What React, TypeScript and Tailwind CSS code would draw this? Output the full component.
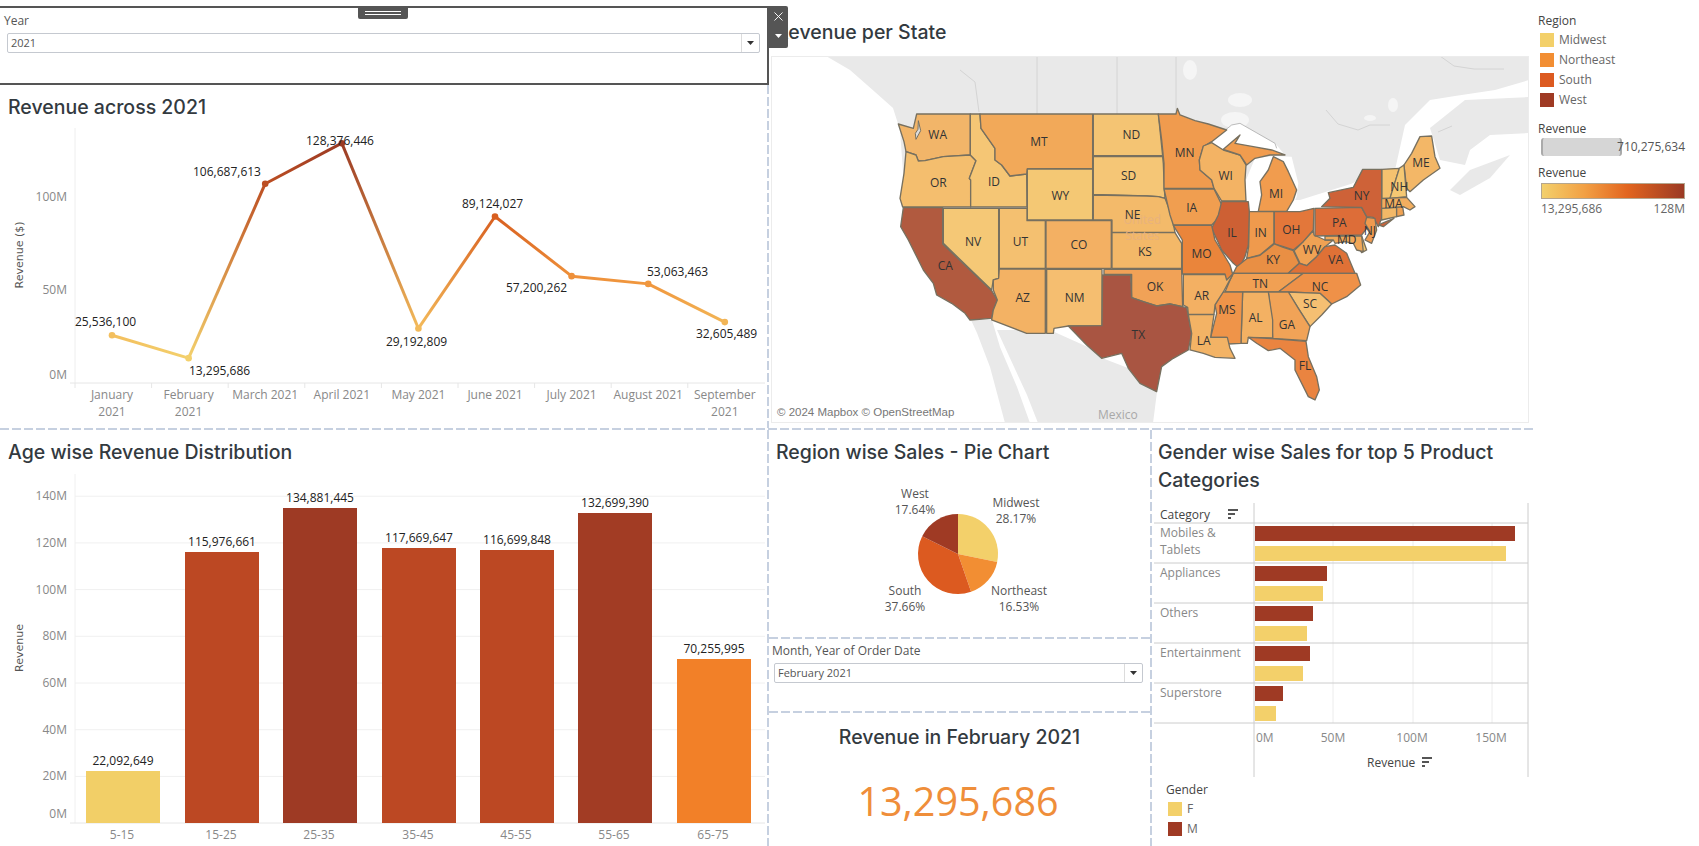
import { X } from "lucide-react";

const GOLD = "#F3D06A";
const ORANGE = "#F28E33";
const RUST = "#DC5A20";
const BROWN = "#9F3A24";

// colour scale of the revenue measure, 13.3M .. 128.4M
const STOPS: [number, number[]][] = [
  [0, [243, 208, 108]],
  [0.3, [242, 160, 68]],
  [0.6, [226, 101, 31]],
  [1, [155, 58, 36]],
];

function revenueColor(v: number) {
  const t = Math.min(1, Math.max(0, (v - 13.3) / (128.4 - 13.3)));
  for (let i = 1; i < STOPS.length; i++) {
    const [p0, c0] = STOPS[i - 1];
    const [p1, c1] = STOPS[i];
    if (t <= p1) {
      const k = (t - p0) / (p1 - p0);
      const mix = c0.map((c, j) => Math.round(c + (c1[j] - c) * k));
      return `rgb(${mix.join(",")})`;
    }
  }
  return "rgb(155,58,36)";
}

const months = [
  { x: 112, v: 25.536, label: "25,536,100", lx: 75, ly: 326, name: ["January", "2021"] },
  { x: 188.6, v: 13.296, label: "13,295,686", lx: 189, ly: 375, name: ["February", "2021"] },
  { x: 265.2, v: 106.688, label: "106,687,613", lx: 193, ly: 176, name: ["March 2021"] },
  { x: 341.8, v: 128.376, label: "128,376,446", lx: 306, ly: 145, name: ["April 2021"] },
  { x: 418.4, v: 29.193, label: "29,192,809", lx: 386, ly: 346, name: ["May 2021"] },
  { x: 495, v: 89.124, label: "89,124,027", lx: 462, ly: 208, name: ["June 2021"] },
  { x: 571.6, v: 57.2, label: "57,200,262", lx: 506, ly: 292, name: ["July 2021"] },
  { x: 648.2, v: 53.063, label: "53,063,463", lx: 647, ly: 276, name: ["August 2021"] },
  { x: 724.8, v: 32.605, label: "32,605,489", lx: 696, ly: 338, name: ["September", "2021"] },
];

const lineY = (v: number) => 383 - v * 1.868;

const ageBars = [
  { name: "5-15", x: 86, top: 771, color: "#F2CF67", label: "22,092,649" },
  { name: "15-25", x: 185, top: 552, color: "#BC4823", label: "115,976,661" },
  { name: "25-35", x: 283, top: 508, color: "#9E3A24", label: "134,881,445" },
  { name: "35-45", x: 382, top: 548, color: "#BC4823", label: "117,669,647" },
  { name: "45-55", x: 480, top: 550, color: "#BC4823", label: "116,699,848" },
  { name: "55-65", x: 578, top: 513, color: "#A23C24", label: "132,699,390" },
  { name: "65-75", x: 677, top: 659, color: "#F28028", label: "70,255,995" },
];

const ageTicks = ["20M", "40M", "60M", "80M", "100M", "120M", "140M"];

// polygons traced in a 3x crop whose corner is (880,100)
const westStates = [
  { id: "WA", fill: "#F2B569", lx: 173, ly: 103, pts: "110,42 271,42 271,165 190,170 135,182 115,183 108,165 78,155 72,125 55,72 100,85" },
  { id: "OR", fill: "#F4BE6E", lx: 175, ly: 247, pts: "78,155 108,165 115,183 135,182 190,170 271,165 288,182 268,235 272,240 272,321 68,321 60,295 72,220" },
  { id: "ID", fill: "#F5C675", lx: 342, ly: 244, pts: "271,42 300,42 303,85 345,145 345,180 365,195 390,228 440,222 441,321 272,321 272,240 268,235 288,182 271,165" },
  { id: "MT", fill: "#F2A959", lx: 477, ly: 124, pts: "300,42 638,42 638,205 442,207 440,222 390,228 365,195 345,180 345,145 303,85" },
  { id: "WY", fill: "#F4C874", lx: 541, ly: 286, pts: "442,207 638,207 638,360 442,360" },
  { id: "ND", fill: "#F4C473", lx: 754, ly: 103, pts: "640,42 835,42 838,70 848,167 640,167" },
  { id: "SD", fill: "#F5C676", lx: 746, ly: 226, pts: "640,170 848,170 850,190 853,265 855,295 835,290 800,288 640,283" },
  { id: "NE", fill: "#F3BA6A", lx: 758, ly: 343, pts: "640,285 800,288 835,290 855,295 875,345 885,397 696,397 696,360 640,360" },
  { id: "KS", fill: "#F3B868", lx: 795, ly: 454, pts: "696,398 885,398 905,430 905,505 696,505" },
  { id: "CO", fill: "#F3B063", lx: 597, ly: 433, pts: "498,362 694,362 694,505 498,505" },
  { id: "UT", fill: "#F4C070", lx: 421, ly: 424, pts: "358,325 441,325 441,362 496,362 496,505 358,505" },
  { id: "NV", fill: "#F5C876", lx: 279, ly: 424, pts: "190,325 356,325 356,535 340,540 335,570 190,430" },
  { id: "CA", fill: "#B15A3F", lx: 196, ly: 497, pts: "70,323 188,323 188,432 335,572 352,600 340,630 335,655 270,660 255,640 215,610 170,585 160,550 130,510 115,480 85,420 62,380" },
  { id: "AZ", fill: "#F3B264", lx: 428, ly: 592, pts: "358,507 496,507 496,700 440,700 335,660 340,630 352,600 340,570 340,540 356,535" },
  { id: "NM", fill: "#F5BE70", lx: 584, ly: 592, pts: "500,508 666,508 666,677 565,678 522,685 520,700 500,700" },
  { id: "OK", fill: "#F1A257", lx: 825, ly: 559, pts: "672,508 905,508 908,620 870,612 830,618 790,605 755,593 755,523 672,523" },
  { id: "TX", fill: "#A95542", lx: 775, ly: 703, pts: "668,525 752,525 755,593 790,605 830,618 870,612 920,623 935,700 925,750 880,775 845,800 830,875 780,850 745,805 725,760 665,775 620,735 565,678 666,677" },
];

// same idea, 3x crop whose corner is (1140,100)
const eastStates = [
  { id: "MN", fill: "#F09B4E", lx: 134, ly: 157, pts: "55,42 108,42 112,25 120,45 165,62 205,72 260,90 215,125 190,140 178,180 180,210 215,240 222,265 72,265 72,190 65,120" },
  { id: "WI", fill: "#F3B364", lx: 257, ly: 227, pts: "190,138 215,128 250,150 300,165 318,195 315,240 318,303 245,303 222,265 215,240 180,210 178,180" },
  { id: "", fill: "#F19C4E", lx: 0, ly: 0, pts: "250,148 300,105 285,130 340,140 395,150 435,165 390,165 345,175 320,195 300,165" },
  { id: "MI", fill: "#F19C4E", lx: 408, ly: 280, pts: "400,170 430,185 445,215 470,270 460,300 440,334 355,334 365,285 360,245 385,210" },
  { id: "IA", fill: "#F09E50", lx: 155, ly: 322, pts: "72,267 222,267 248,320 245,345 215,375 100,375 90,345" },
  { id: "IN", fill: "#EF9A4D", lx: 362, ly: 397, pts: "327,335 402,335 402,430 360,465 320,475 326,440" },
  { id: "IL", fill: "#CD6034", lx: 276, ly: 397, pts: "245,305 325,305 328,335 325,435 315,470 298,505 280,490 245,450 215,385 235,345" },
  { id: "OH", fill: "#E3773A", lx: 454, ly: 388, pts: "403,335 445,335 480,335 522,325 520,390 490,425 460,450 430,440 403,432" },
  { id: "KY", fill: "#E98F44", lx: 399, ly: 479, pts: "280,520 290,500 320,476 360,466 403,432 430,442 460,452 478,490 445,520 310,520" },
  { id: "WV", fill: "#F0A254", lx: 516, ly: 449, pts: "522,405 555,420 580,420 550,445 530,470 500,497 480,490 462,452 490,425 520,392" },
  { id: "VA", fill: "#DF7136", lx: 587, ly: 479, pts: "445,520 478,490 500,497 530,470 555,440 585,435 620,460 645,520" },
  { id: "TN", fill: "#F1A053", lx: 361, ly: 550, pts: "255,576 268,545 280,520 490,520 450,550 415,576" },
  { id: "NC", fill: "#EF9148", lx: 540, ly: 559, pts: "415,576 450,550 490,520 650,520 662,555 620,590 575,612 540,580 445,576" },
  { id: "SC", fill: "#F5BF72", lx: 510, ly: 610, pts: "445,576 540,580 575,612 545,645 510,680 475,625" },
  { id: "GA", fill: "#F1A357", lx: 441, ly: 673, pts: "385,576 445,576 475,625 510,680 500,722 398,715 395,660" },
  { id: "AL", fill: "#F3B163", lx: 347, ly: 652, pts: "308,576 385,576 398,660 398,714 325,712 322,730 303,730" },
  { id: "MS", fill: "#EF9449", lx: 261, ly: 628, pts: "248,576 308,576 303,730 265,732 260,712 212,712 230,640 225,615" },
  { id: "AR", fill: "#F3B063", lx: 185, ly: 587, pts: "130,524 278,524 250,576 225,615 222,643 145,643 143,622 130,615" },
  { id: "MO", fill: "#EA853B", lx: 185, ly: 462, pts: "100,376 215,376 225,420 270,495 278,522 260,540 255,522 127,522 127,420" },
  { id: "LA", fill: "#F3B365", lx: 191, ly: 722, pts: "145,644 222,644 212,712 262,712 270,745 285,775 225,772 190,760 150,750 155,700" },
  { id: "FL", fill: "#EA8440", lx: 495, ly: 796, pts: "325,712 395,716 498,724 505,770 530,830 538,870 525,900 505,890 465,810 465,780 420,745 385,752 350,730" },
  { id: "", fill: "#F5C66F", lx: 0, ly: 0, pts: "665,408 680,450 665,458 650,430" },
  { id: "", fill: "#F1A758", lx: 0, ly: 0, pts: "555,408 665,408 670,455 650,450 640,430 615,425 585,430 580,420 555,420" },
  { id: "PA", fill: "#DD6D38", lx: 598, ly: 367, pts: "525,325 665,322 680,350 680,385 665,405 525,408" },
  { id: "", fill: "#CE6238", lx: 0, ly: 0, pts: "715,375 762,355 730,380" },
  { id: "NY", fill: "#CE6238", lx: 665, ly: 286, pts: "545,320 570,295 565,278 640,262 668,208 725,208 725,355 715,380 700,352 680,350 665,322" },
  { id: "", fill: "#F5C26F", lx: 0, ly: 0, pts: "726,208 778,205 750,295 726,295" },
  { id: "", fill: "#F3B867", lx: 0, ly: 0, pts: "725,325 770,322 770,350 725,360" },
  { id: "", fill: "#F0A252", lx: 0, ly: 0, pts: "770,322 788,320 792,345 770,350" },
  { id: "ME", fill: "#F3B767", lx: 843, ly: 187, pts: "792,195 815,160 840,110 875,108 885,170 900,205 850,240 810,275 800,265" },
  { id: "NH", fill: "#F5C873", lx: 778, ly: 259, pts: "778,205 792,195 800,290 750,295" },
  { id: "MA", fill: "#F2AE5F", lx: 760, ly: 310, pts: "725,296 800,292 825,320 810,330 790,320 725,325" },
  { id: "NJ", fill: "#EF9A4F", lx: 690, ly: 392, pts: "680,352 705,355 710,390 695,430 675,420 690,395 675,370" },
  { id: "MD", fill: "#F1A758", lx: 620, ly: 420, pts: "" },
];

const lakes = [
  "200,135 275,75 300,70 405,130 435,165 395,150 340,140 285,130 300,105 250,148",
  "318,335 318,240 345,175 400,168 385,210 360,245 365,285 355,332",
  "400,168 455,170 475,250 470,290 450,330 470,270 445,215 430,185",
  "450,330 500,325 560,295 640,250 650,240 640,262 565,278 545,320 522,325 480,335",
];

const categories = [
  { name: ["Mobiles &", "Tablets"], m: 1515, f: 1506 },
  { name: ["Appliances"], m: 1327, f: 1323 },
  { name: ["Others"], m: 1313, f: 1307 },
  { name: ["Entertainment"], m: 1310, f: 1303 },
  { name: ["Superstore"], m: 1283, f: 1276 },
];

const pieSlices = [
  { share: 28.17, color: GOLD },
  { share: 16.53, color: ORANGE },
  { share: 37.66, color: RUST },
  { share: 17.64, color: BROWN },
];

const pieLabels = [
  { cx: 915, y: 498, name: "West", pct: "17.64%" },
  { cx: 1016, y: 507, name: "Midwest", pct: "28.17%" },
  { cx: 905, y: 595, name: "South", pct: "37.66%" },
  { cx: 1019, y: 595, name: "Northeast", pct: "16.53%" },
];

function piePaths() {
  const cx = 958;
  const cy = 554;
  const r = 40;
  let acc = 0;
  return pieSlices.map((s) => {
    const a0 = (acc / 100) * Math.PI * 2;
    acc += s.share;
    const a1 = (acc / 100) * Math.PI * 2;
    const large = s.share > 50 ? 1 : 0;
    const d = `M${cx} ${cy}L${cx + r * Math.sin(a0)} ${cy - r * Math.cos(a0)}A${r} ${r} 0 ${large} 1 ${cx + r * Math.sin(a1)} ${cy - r * Math.cos(a1)}Z`;
    return { d, color: s.color };
  });
}

function Title({ children }: { children: React.ReactNode }) {
  return <h2 className="font-['Inter',sans-serif] text-[19.5px] leading-[28px] font-medium text-[#333a3f]">{children}</h2>;
}

function VDash() {
  return <div className="w-[2px] shrink-0 self-stretch bg-[repeating-linear-gradient(180deg,#c6d0e0_0_9px,transparent_9px_12px)]" />;
}

function HDash() {
  return <div className="h-[2px] w-full shrink-0 bg-[repeating-linear-gradient(90deg,#c6d0e0_0_9px,transparent_9px_12px)]" />;
}

function Dropdown({ value, className }: { value: string; className: string }) {
  return (
    <div className={`flex h-[20px] items-center rounded-[2px] border border-[#c5c9d0] bg-white ${className}`}>
      <span className="flex-1 pl-[3px] text-[11px] text-[#555]">{value}</span>
      <span className="flex h-full w-[18px] items-center justify-center border-l border-[#dcdcdc]">
        <svg width="7" height="4" viewBox="0 0 7 4">
          <path d="M0 0h7L3.5 4z" fill="#333" />
        </svg>
      </span>
    </div>
  );
}

function LegendRow({ color, label }: { color: string; label: string }) {
  return (
    <div className="flex h-[20px] items-center gap-[5px] pl-[2px]">
      <span className="h-[14px] w-[14px]" style={{ backgroundColor: color }} />
      <span className="text-[12px] text-[#666]">{label}</span>
    </div>
  );
}

function SortIcon({ x, y }: { x: number; y: number }) {
  return (
    <g fill="#555">
      <rect x={x} y={y} width="10" height="2" />
      <rect x={x} y={y + 4} width="7" height="2" />
      <rect x={x} y={y + 8} width="3" height="2" />
    </g>
  );
}

function RevenueLine() {
  return (
    <svg viewBox="0 118 767 308" className="block h-[308px] w-[767px] text-[12px]">
      <defs>
        {months.slice(1).map((m, i) => (
          <linearGradient
            key={m.x}
            id={`seg${i}`}
            gradientUnits="userSpaceOnUse"
            x1={months[i].x}
            y1={lineY(months[i].v)}
            x2={m.x}
            y2={lineY(m.v)}
          >
            <stop offset="0" stopColor={revenueColor(months[i].v)} />
            <stop offset="1" stopColor={revenueColor(m.v)} />
          </linearGradient>
        ))}
      </defs>
      <line x1="75" y1="128" x2="75" y2="383" stroke="#eeeeee" />
      <line x1="70" y1="383" x2="765" y2="383" stroke="#e6e6e6" />
      {months.map((m, i) => (
        <line key={m.x} x1={75 + i * 76.6} y1="383" x2={75 + i * 76.6} y2="388" stroke="#e6e6e6" />
      ))}
      <text x="67" y="201" textAnchor="end" className="fill-[#888]">100M</text>
      <text x="67" y="294" textAnchor="end" className="fill-[#888]">50M</text>
      <text x="67" y="379" textAnchor="end" className="fill-[#888]">0M</text>
      <text transform="translate(23 255) rotate(-90)" textAnchor="middle" className="fill-[#555] font-['DejaVu_Sans',sans-serif] text-[11px]">Revenue ($)</text>
      {months.slice(1).map((m, i) => (
        <line
          key={m.x}
          x1={months[i].x}
          y1={lineY(months[i].v)}
          x2={m.x}
          y2={lineY(m.v)}
          stroke={`url(#seg${i})`}
          strokeWidth="3"
        />
      ))}
      {months.map((m) => (
        <circle key={m.x} cx={m.x} cy={lineY(m.v)} r="3.3" fill={revenueColor(m.v)} />
      ))}
      {months.map((m) => (
        <text key={m.label} x={m.lx} y={m.ly} className="fill-[#222]">{m.label}</text>
      ))}
      {months.map((m) =>
        m.name.map((part, j) => (
          <text key={part + m.x} x={m.x} y={399 + j * 17} textAnchor="middle" className="fill-[#888]">{part}</text>
        )),
      )}
    </svg>
  );
}

function UsMap() {
  return (
    <svg viewBox="772 57 756 365" className="block h-full w-full">
      {/* land */}
      <g fill="#e9e9e9">
        <polygon points="826,56 1529,56 1529,80 1495,90 1455,96 1430,100 1405,125 1395,170 1300,200 1000,200 905,200 900,130 893,108 875,92 850,70" />
        <polygon points="1430,128 1465,100 1529,97 1529,133 1490,135 1470,150 1465,165 1440,160" />
        <polygon points="1450,190 1470,170 1510,155 1490,178 1460,195" />
        <polygon points="971,320 992,320 1000,347 1017,387 1030,423 1005,423 990,367 977,333" />
        <polygon points="997,330 1050,330 1090,348 1102,358 1128,368 1157,392 1153,423 1038,423 1027,395" />
      </g>
      <g fill="#f5f5f5">
        <ellipse cx="1240" cy="100" rx="12" ry="7" />
        <ellipse cx="1235" cy="120" rx="14" ry="8" />
        <ellipse cx="1370" cy="118" rx="6" ry="3" />
        <ellipse cx="1393" cy="105" rx="5" ry="7" />
        <ellipse cx="1190" cy="70" rx="7" ry="10" />
      </g>
      <g stroke="#d4d4d4" fill="none">
        <path d="M1037 56V114M1117 56V114M1176 56V114" />
        <path d="M960 70l15 12 4 30M1326 110l12 14 20 6 12-5 20 0M1440 56l14 10 20 3 30 0M1438 132l14-6" />
      </g>
      {/* states */}
      <g transform="translate(880 100) scale(0.3333)" stroke="#77705f" strokeWidth="4" strokeLinejoin="round">
        {westStates.map((s) => (
          <polygon key={s.id} points={s.pts} fill={s.fill} />
        ))}
        <polygon points="115,62 122,92 108,118 106,100 114,88" fill="#dddddd" strokeWidth="3" />
      </g>
      <g transform="translate(1140 100) scale(0.3333)">
        <g fill="#ffffff">
          {lakes.map((p) => (
            <polygon key={p} points={p} />
          ))}
        </g>
        <path d="M200 135L275 75 300 70 405 130 410 145" fill="none" stroke="#9a9a9a" strokeWidth="2" />
        <g stroke="#77705f" strokeWidth="4" strokeLinejoin="round">
          {eastStates.filter((s) => s.pts).map((s) => (
            <polygon key={s.pts} points={s.pts} fill={s.fill} />
          ))}
        </g>
      </g>
      {/* labels */}
      <g transform="translate(880 100) scale(0.3333)" textAnchor="middle" className="fill-[#333] text-[36px]">
        <text x="787" y="371" className="fill-[#e8b27e]">United</text>
        <text x="787" y="420" className="fill-[#e8b27e]">States</text>
        {westStates.map((s) => (
          <text key={s.id} x={s.lx} y={s.ly + 13}>{s.id}</text>
        ))}
      </g>
      <g transform="translate(1140 100) scale(0.3333)" textAnchor="middle" className="fill-[#333] text-[36px]">
        {eastStates.filter((s) => s.id).map((s) => (
          <text key={s.id} x={s.lx} y={s.ly + 13}>{s.id}</text>
        ))}
      </g>
    </svg>
  );
}

function AgeBars() {
  return (
    <svg viewBox="0 466 767 380" className="block h-[380px] w-[767px] text-[12px]">
      <line x1="75" y1="474" x2="75" y2="823" stroke="#f0f0f0" />
      {ageTicks.map((t, i) => {
        const y = 776.4 - i * 46.7;
        return (
          <g key={t}>
            <line x1="75" y1={y} x2="765" y2={y} stroke="#f0f0f0" />
            <text x="67" y={y + 4} textAnchor="end" className="fill-[#888]">{t}</text>
          </g>
        );
      })}
      <text x="67" y="818" textAnchor="end" className="fill-[#888]">0M</text>
      <line x1="70" y1="823" x2="765" y2="823" stroke="#e6e6e6" />
      <text transform="translate(23 648) rotate(-90)" textAnchor="middle" className="fill-[#555] font-['DejaVu_Sans',sans-serif] text-[11px]">Revenue</text>
      {ageBars.map((b) => (
        <g key={b.name}>
          <rect x={b.x} y={b.top} width="74" height={823 - b.top} fill={b.color} />
          <text x={b.x + 37} y={b.top - 6} textAnchor="middle" className="fill-[#222]">{b.label}</text>
          <text x={b.x + 36} y="839" textAnchor="middle" className="fill-[#888]">{b.name}</text>
        </g>
      ))}
    </svg>
  );
}

function RegionPie() {
  return (
    <svg viewBox="769 466 380 171" className="block h-[171px] w-[380px] text-[12px]">
      {piePaths().map((p) => (
        <path key={p.color} d={p.d} fill={p.color} />
      ))}
      {pieLabels.map((l) => (
        <g key={l.name} textAnchor="middle" className="fill-[#555]">
          <text x={l.cx} y={l.y}>{l.name}</text>
          <text x={l.cx} y={l.y + 16}>{l.pct}</text>
        </g>
      ))}
    </svg>
  );
}

function GenderBars() {
  return (
    <svg viewBox="1152 494 384 286" className="block h-[286px] w-[384px] text-[12px]">
      {[1333, 1413, 1492].map((x) => (
        <line key={x} x1={x} y1="523" x2={x} y2="723" stroke="#ececec" />
      ))}
      <text x="1160" y="519" className="fill-[#444]">Category</text>
      <SortIcon x={1228} y={509} />
      {categories.map((c, i) => {
        const top = 523 + i * 40;
        return (
          <g key={c.name[0]}>
            <rect x="1255" y={top + 3} width={c.m - 1255} height="15" fill={BROWN} />
            <rect x="1255" y={top + 23} width={c.f - 1255} height="15" fill={GOLD} />
            {c.name.map((part, j) => (
              <text key={part} x="1160" y={top + 14 + j * 17} className="fill-[#888]">{part}</text>
            ))}
          </g>
        );
      })}
      {[523, 563, 603, 643, 683, 723].map((y) => (
        <line key={y} x1="1154" y1={y} x2="1528" y2={y} stroke="#cccccc" />
      ))}
      <line x1="1254" y1="503" x2="1254" y2="777" stroke="#cccccc" />
      <line x1="1528" y1="503" x2="1528" y2="777" stroke="#cccccc" />
      <text x="1256" y="742" className="fill-[#888]">0M</text>
      <text x="1333" y="742" textAnchor="middle" className="fill-[#888]">50M</text>
      <text x="1412" y="742" textAnchor="middle" className="fill-[#888]">100M</text>
      <text x="1491" y="742" textAnchor="middle" className="fill-[#888]">150M</text>
      <text x="1367" y="767" className="fill-[#444]">Revenue</text>
      <SortIcon x={1422} y={757} />
    </svg>
  );
}

export default function App() {
  return (
    <div className="flex h-[846px] w-[1699px] overflow-hidden bg-white font-['Open_Sans',sans-serif]">
      <div className="flex w-[1536px] shrink-0 flex-col">
        {/* top row */}
        <div className="flex h-[428px] shrink-0">
          <div className="relative flex w-[769px] shrink-0 flex-col">
            <div className="mt-[6px] h-[79px] shrink-0 border-t-2 border-r-2 border-b-2 border-[#555] pt-[5px] pl-[4px]">
              <p className="text-[12px] leading-[15px] text-[#555]">Year</p>
              <Dropdown value="2021" className="mt-[5px] ml-[3px] w-[753px]" />
            </div>
            <div className="absolute top-[7px] left-[358px] flex h-[12px] w-[50px] flex-col items-center justify-center gap-[2px] rounded-b-[2px] bg-[#555]">
              <span className="h-px w-[36px] bg-white" />
              <span className="h-px w-[36px] bg-white" />
            </div>
            <div className="absolute top-[6px] left-[769px] z-10 flex h-[42px] w-[19px] flex-col items-center rounded-r-[2px] bg-[#555]">
              <X size={15} strokeWidth={1.5} className="mt-[3px] text-white" />
              <svg width="7" height="4" viewBox="0 0 7 4" className="mt-[10px]">
                <path d="M0 0h7L3.5 4z" fill="#ffffff" />
              </svg>
            </div>
            <div className="flex flex-1">
              <div className="w-[767px]">
                <div className="h-[33px] pl-[8px] pt-[8px]">
                  <Title>Revenue across 2021</Title>
                </div>
                <RevenueLine />
              </div>
              <VDash />
            </div>
          </div>
          <div className="flex flex-1 flex-col">
            <div className="h-[56px] pl-[7px] pt-[18px]">
              <Title>Revenue per State</Title>
            </div>
            <div className="relative ml-[2px] h-[367px] w-[758px] overflow-hidden border border-[#ececec]">
              <UsMap />
              <span className="absolute bottom-[2px] left-[4px] bg-white/70 px-[1px] font-['Liberation_Sans',sans-serif] text-[11.5px] leading-[15px] text-[#777]">
                © 2024 Mapbox © OpenStreetMap
              </span>
              <span className="absolute bottom-0 left-[326px] text-[12px] leading-[14px] text-[#a8a8a8]">Mexico</span>
            </div>
          </div>
        </div>

        <HDash />

        {/* bottom row */}
        <div className="flex flex-1">
          <div className="w-[767px] shrink-0">
            <div className="h-[36px] pl-[8px] pt-[8px]">
              <Title>Age wise Revenue Distribution</Title>
            </div>
            <AgeBars />
          </div>
          <VDash />
          <div className="flex w-[381px] shrink-0 flex-col">
            <div className="h-[36px] pl-[7px] pt-[8px]">
              <Title>Region wise Sales - Pie Chart</Title>
            </div>
            <RegionPie />
            <HDash />
            <div className="h-[72px] shrink-0 pt-[4px] pl-[3px]">
              <p className="text-[12px] leading-[16px] text-[#555]">Month, Year of Order Date</p>
              <Dropdown value="February 2021" className="mt-[4px] ml-[2px] w-[369px]" />
            </div>
            <HDash />
            <div className="flex flex-1 flex-col items-center pt-[10px]">
              <Title>Revenue in February 2021</Title>
              <p className="mt-[25px] pr-[3px] text-[39.5px] leading-[50px] text-[#EF8E3A]">13,295,686</p>
            </div>
          </div>
          <VDash />
          <div className="flex-1">
            <div className="pt-[8px] pl-[6px] pr-[3px]">
              <Title>Gender wise Sales for top 5 Product Categories</Title>
            </div>
            <GenderBars />
            <div className="pl-[14px] pt-[1px]">
              <p className="text-[12px] leading-[18px] text-[#444]">Gender</p>
              <LegendRow color={GOLD} label="F" />
              <LegendRow color={BROWN} label="M" />
            </div>
          </div>
        </div>
      </div>

      {/* legends */}
      <aside className="flex-1 pt-[12px] pl-[2px]">
        <p className="text-[12px] leading-[18px] text-[#444]">Region</p>
        <LegendRow color={GOLD} label="Midwest" />
        <LegendRow color={ORANGE} label="Northeast" />
        <LegendRow color={RUST} label="South" />
        <LegendRow color={BROWN} label="West" />
        <p className="mt-[10px] text-[12px] leading-[18px] text-[#444]">Revenue</p>
        <div className="relative ml-[3px] h-[18px] w-[144px]">
          <div className="h-full w-[81px] rounded-[3px] border-x-2 border-x-[#aaaaaa] bg-[#d6d6d6]" />
          <span className="absolute top-0 right-0 text-[12px] leading-[18px] text-[#555]">710,275,634</span>
        </div>
        <p className="mt-[8px] text-[12px] leading-[18px] text-[#444]">Revenue</p>
        <div className="mt-[1px] ml-[3px] h-[16px] w-[144px] border border-[#b5a68e] bg-[linear-gradient(90deg,#F3D06C_0%,#F2A044_30%,#E2651F_60%,#9B3A24_100%)]" />
        <div className="ml-[3px] flex w-[144px] justify-between text-[12px] leading-[20px] text-[#666]">
          <span>13,295,686</span>
          <span>128M</span>
        </div>
      </aside>
    </div>
  );
}
